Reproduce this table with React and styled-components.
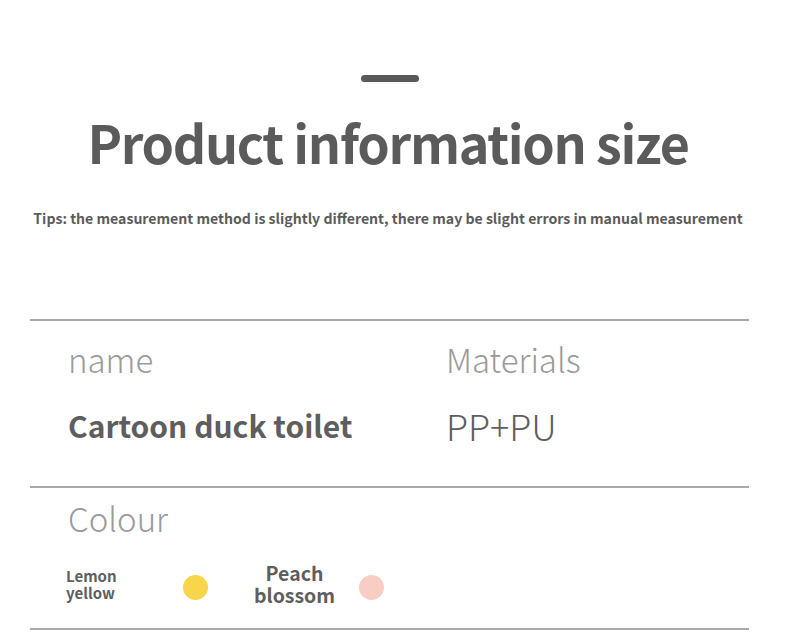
import styled, { createGlobalStyle } from 'styled-components';

const GlobalStyle = createGlobalStyle`
  html, body {
    margin: 0;
    padding: 0;
    background: #ffffff;
  }
  body {
    font-family: "Noto Sans CJK SC", "Noto Sans", sans-serif;
  }
`;

const Page = styled.div`
  width: 790px;
  height: 633px;
  overflow: hidden;
  background: #fff;
`;

const Head = styled.div`
  display: flex;
  flex-direction: column;
  align-items: center;
  padding-right: 14px;
`;

const Dash = styled.div`
  flex-shrink: 0;
  width: 58px;
  height: 7px;
  border-radius: 4px;
  background: #595959;
  margin: 75px 0 0 3px;
`;

const Title = styled.h1`
  margin: 24px 0 0;
  font-size: 52px;
  line-height: 72px;
  letter-spacing: -1.3px;
  font-weight: 700;
  color: #5b5b5b;
  white-space: nowrap;
`;

const Tips = styled.p`
  margin: 29px 0 0;
  font-size: 14.1px;
  line-height: 22px;
  font-weight: 700;
  color: #5b5b5b;
  white-space: nowrap;
`;

const Table = styled.div`
  width: 719px;
  margin: 90px 0 0 30px;
  border-top: 2px solid #a9a9a9;
`;

const Row = styled.div`
  display: grid;
  grid-template-columns: ${p => p.$cols || '1fr'};
  padding: ${p => p.$top}px 0 0 38px;
  height: ${p => p.$h}px;
  box-sizing: border-box;
  border-bottom: 2px solid #a9a9a9;
`;

const Cell = styled.div`
  display: flex;
  flex-direction: column;
`;

const Label = styled.div`
  font-size: 33px;
  line-height: 40px;
  font-weight: 300;
  color: #9a9a9a;
`;

const Value = styled.div`
  margin-top: 26px;
  font-size: ${p => p.$size || 30}px;
  line-height: 40px;
  font-weight: ${p => p.$weight || 400};
  color: #5e5e5e;
`;

const Swatches = styled.div`
  display: flex;
  align-items: center;
  margin-top: 24px;
  margin-left: -2px;
`;

const Swatch = styled.div`
  display: flex;
  align-items: center;
  gap: ${p => p.$gap}px;
  margin-right: ${p => p.$mr || 0}px;
`;

const SwatchName = styled.div`
  font-size: ${p => p.$size}px;
  line-height: ${p => p.$lh}px;
  font-weight: 700;
  color: #5e5e5e;
  text-align: ${p => p.$align || 'left'};
  width: ${p => p.$w}px;
  margin-bottom: 6px;
`;

const Dot = styled.span`
  width: 25px;
  height: 25px;
  border-radius: 50%;
  background: ${p => p.$color};
`;

export default function App() {
  return (
    <>
      <GlobalStyle />
      <Page>
        <Head>
          <Dash />
          <Title>Product information size</Title>
          <Tips>Tips: the measurement method is slightly different, there may be slight errors in manual measurement</Tips>
        </Head>
        <Table>
          <Row $cols="378px 1fr" $h={167} $top={18}>
            <Cell>
              <Label>name</Label>
              <Value $weight={700}>Cartoon duck toilet</Value>
            </Cell>
            <Cell>
              <Label>Materials</Label>
              <Value $size={36} $weight={300}>PP+PU</Value>
            </Cell>
          </Row>
          <Row $h={142} $top={10}>
            <Cell>
              <Label>Colour</Label>
              <Swatches>
                <Swatch $gap={42} $mr={34}>
                  <SwatchName $size={15} $lh={17} $w={75}>Lemon<br />yellow</SwatchName>
                  <Dot $color="#f8d54a" />
                </Swatch>
                <Swatch $gap={12}>
                  <SwatchName $size={19.5} $lh={22} $w={105} $align="center">Peach<br />blossom</SwatchName>
                  <Dot $color="#f9cdc3" />
                </Swatch>
              </Swatches>
            </Cell>
          </Row>
        </Table>
      </Page>
    </>
  );
}
